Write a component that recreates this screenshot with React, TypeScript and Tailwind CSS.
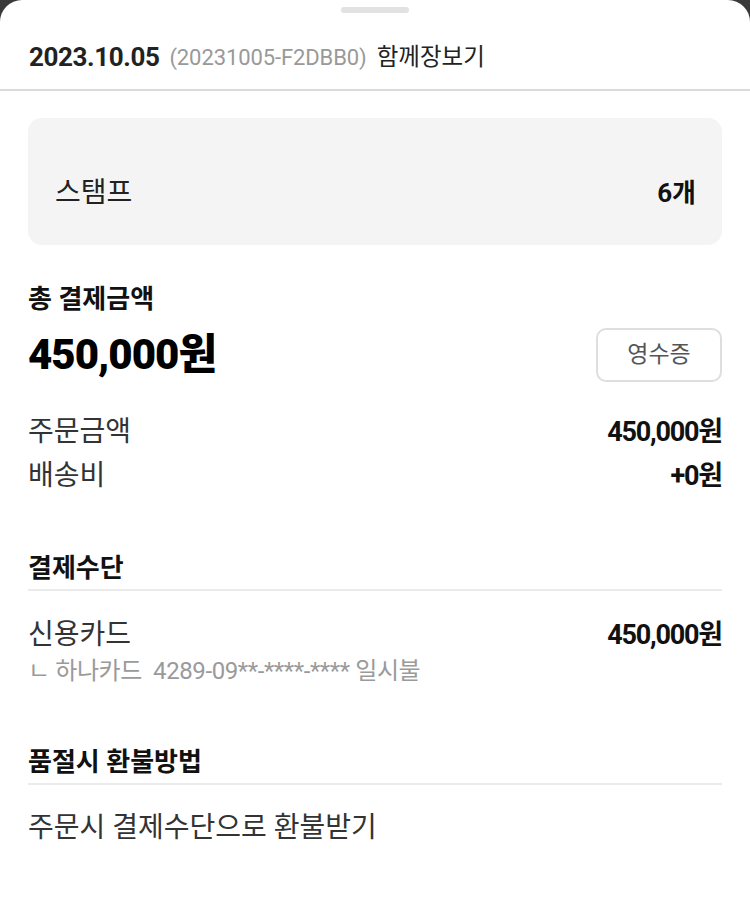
import React from 'react';

const font = { fontFamily: 'Roboto, "Noto Sans CJK KR", sans-serif' };

function Row({ label, value }: { label: string; value: string }) {
  return (
    <div className="flex items-center justify-between h-[36px]">
      <span className="text-[28px] text-[#333] leading-[36px]">{label}</span>
      <span className="text-[27px] font-bold text-[#111] tracking-[-1.2px] leading-[36px]">{value}</span>
    </div>
  );
}

function SectionTitle({ children }: { children: React.ReactNode }) {
  return (
    <div className="border-b-2 border-[#ebebeb] pb-[4px]">
      <h2 className="text-[26px] font-bold text-[#111] leading-[34px]">{children}</h2>
    </div>
  );
}

export default function App() {
  return (
    <div className="w-[750px] h-[921px] bg-[#3a3a3a]" style={font}>
      <div className="h-full bg-white rounded-t-[22px] overflow-hidden">
        {/* drag handle */}
        <div className="flex justify-center pt-[7px]">
          <div className="w-[68px] h-[6px] rounded-full bg-[#e2e2e2]" />
        </div>

        {/* header */}
        <div className="flex items-center gap-[10px] px-[29px] pt-[26px] pb-[14px] border-b-2 border-[#d8dbde] h-[78px]">
          <span className="text-[26px] font-bold text-[#222] tracking-[-0.4px] leading-[36px]">2023.10.05</span>
          <span className="text-[22px] text-[#999] tracking-[-0.1px] leading-[36px] pt-[2px]">(20231005-F2DBB0)</span>
          <span className="text-[23.5px] text-[#222] leading-[36px]">함께장보기</span>
        </div>

        <div className="px-[28px]">
          {/* stamp card */}
          <div className="mt-[27px] h-[127px] rounded-[14px] bg-[#f4f4f4] flex items-center justify-between pl-[27px] pr-[26px] pt-[23px]">
            <span className="text-[28px] text-[#222] leading-[36px]">스탬프</span>
            <span className="text-[26px] font-bold text-[#111] leading-[36px]">6개</span>
          </div>

          {/* total */}
          <div className="mt-[37px]">
            <h2 className="text-[26px] font-bold text-[#111] leading-[34px]">총 결제금액</h2>
            <div className="mt-[12px] flex items-center justify-between h-[54px]">
              <span className="text-[42px] font-black text-[#000] tracking-[-1px] leading-[54px]">450,000원</span>
              <button className="w-[126px] h-[54px] rounded-[10px] border-2 border-[#dedede] text-[23px] text-[#555] bg-white">
                영수증
              </button>
            </div>
            <div className="mt-[32px] flex flex-col gap-[8px]">
              <Row label="주문금액" value="450,000원" />
              <Row label="배송비" value="+0원" />
            </div>
          </div>

          {/* payment method */}
          <div className="mt-[57px]">
            <SectionTitle>결제수단</SectionTitle>
            <div className="mt-[26px]">
              <Row label="신용카드" value="450,000원" />
              <div className="mt-[2px] text-[24px] text-[#9a9a9a] tracking-[-0.4px] leading-[32px]">
                ㄴ 하나카드&nbsp;&nbsp;4289-09**-****-**** 일시불
              </div>
            </div>
          </div>

          {/* refund */}
          <div className="mt-[58px]">
            <SectionTitle>품절시 환불방법</SectionTitle>
            <div className="mt-[25px] text-[28px] text-[#333] leading-[36px]">주문시 결제수단으로 환불받기</div>
          </div>
        </div>
      </div>
    </div>
  );
}
